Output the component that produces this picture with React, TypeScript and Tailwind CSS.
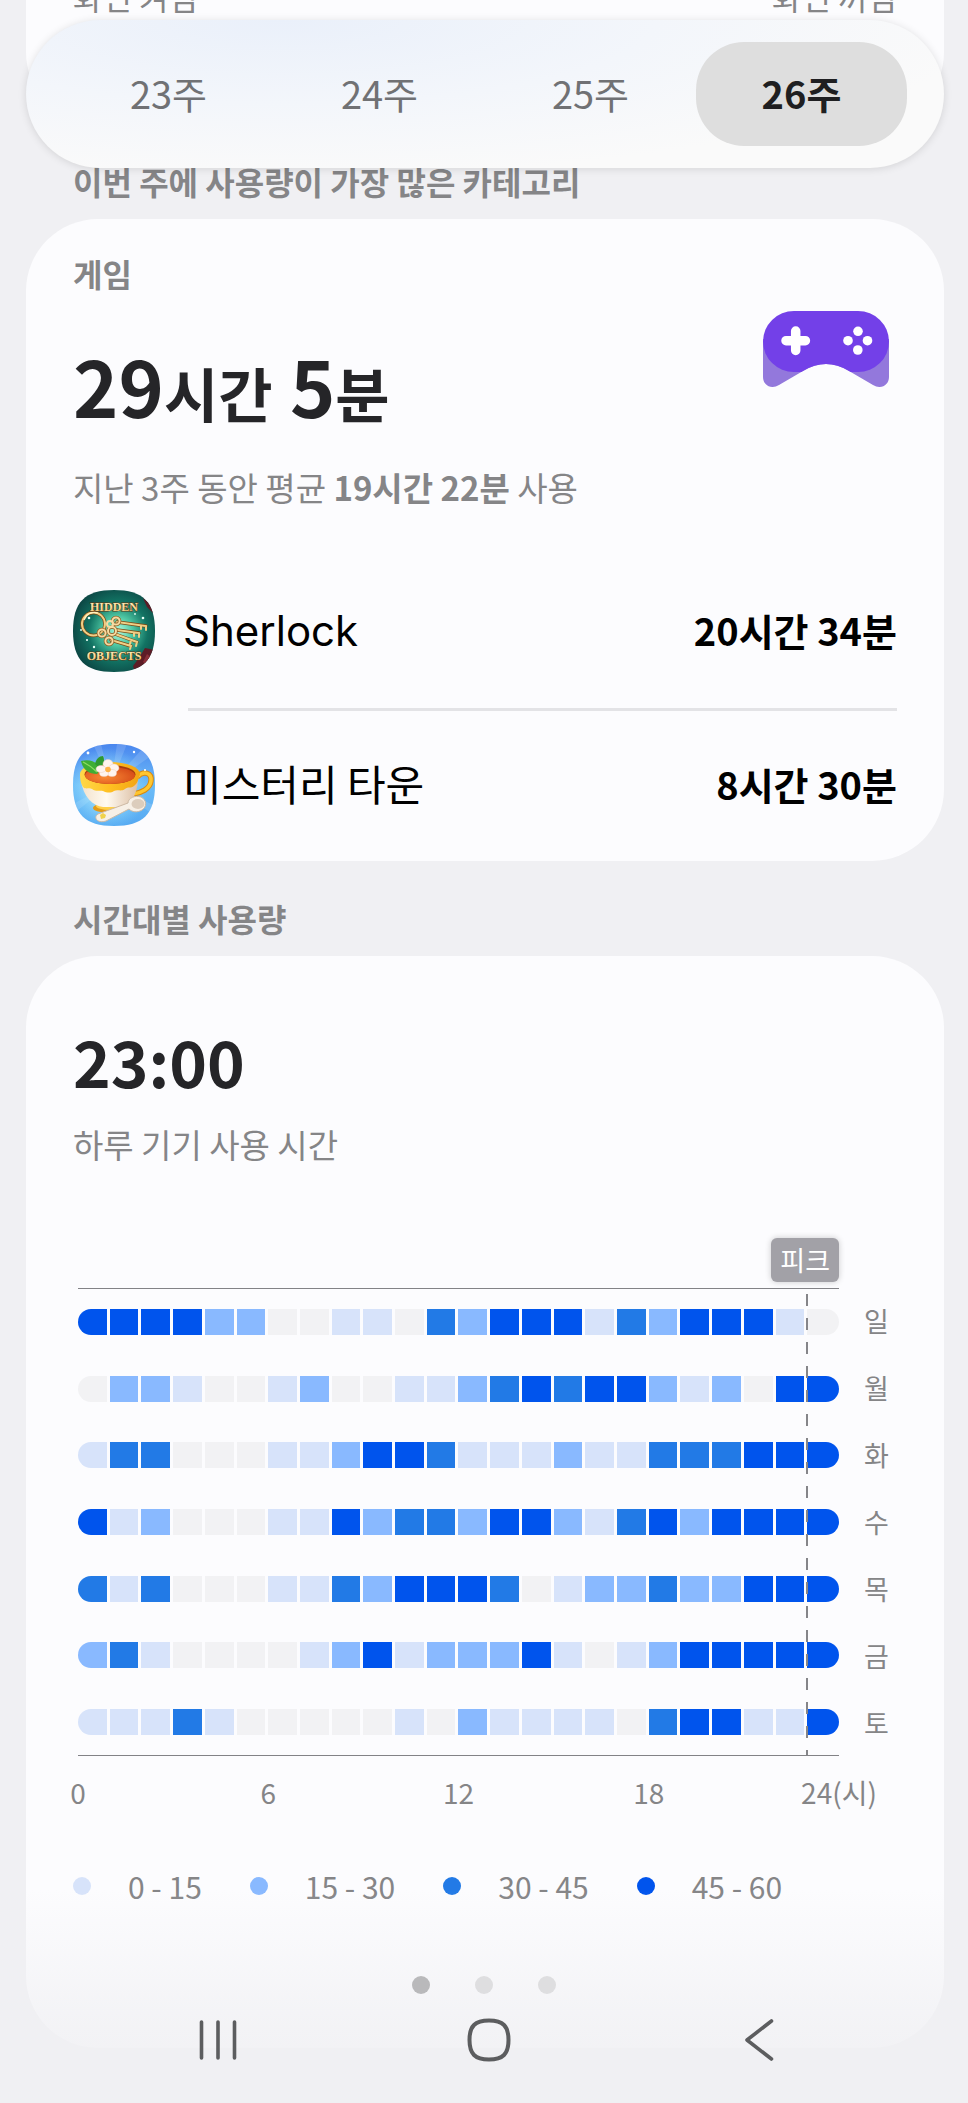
import { useState } from "react";

const WEEKS = ["23주", "24주", "25주", "26주"];

const LEVELS = [
  "bg-[#f2f2f4]",
  "bg-[#d7e3fa]",
  "bg-[#89b9ff]",
  "bg-[#227ae6]",
  "bg-[#0054ed]",
];

const LEGEND = [
  { label: "0 - 15", level: 1 },
  { label: "15 - 30", level: 2 },
  { label: "30 - 45", level: 3 },
  { label: "45 - 60", level: 4 },
];

// One digit per hour of the day; each digit indexes LEVELS.
const DAYS = [
  { name: "일", hours: "444422001103244413244410" },
  { name: "월", hours: "022100120011234344212044" },
  { name: "화", hours: "133000112443111211333444" },
  { name: "수", hours: "412000114233244213424444" },
  { name: "목", hours: "313000113244430122322444" },
  { name: "금", hours: "231000012412224101244444" },
  { name: "토", hours: "111310000010211110344114" },
];

const SQUIRCLE =
  "M41 0C70 0 82 12 82 41C82 70 70 82 41 82C12 82 0 70 0 41C0 12 12 0 41 0Z";

function SherlockIcon() {
  return (
    <svg viewBox="0 0 82 82" className="size-[82px] shrink-0" aria-hidden="true">
      <defs>
        <clipPath id="s-clip">
          <path d={SQUIRCLE} />
        </clipPath>
        <radialGradient id="s-bg" cx="0.55" cy="0.5" r="0.58">
          <stop offset="0" stopColor="#b4fbe0" />
          <stop offset="0.3" stopColor="#4fc8a4" />
          <stop offset="0.62" stopColor="#127363" />
          <stop offset="1" stopColor="#0c4543" />
        </radialGradient>
        <linearGradient id="s-gold" x1="0" y1="0" x2="0" y2="1">
          <stop offset="0" stopColor="#fff6c4" />
          <stop offset="1" stopColor="#efc473" />
        </linearGradient>
      </defs>
      <g clipPath="url(#s-clip)">
        <rect width="82" height="82" fill="url(#s-bg)" />
        <path d="M70 8l5 4 5 1v10l-6-6zM66 68l6-10 10 2v22H62l-2-6z" fill="#5d1c26" />
        <path d="M70 72l4-8 5 4-3 9z" fill="#8a2f38" />
        <g fill="none" stroke="#7a4b16" strokeWidth="3.400" strokeLinecap="round">
          <circle cx="20.500" cy="34" r="11.500" />
          <path d="M44 32L73 36M44 40l22 3M42 44l22 8M38 50l20 6" />
        </g>
        <g fill="none" stroke="#f0cf86" strokeWidth="2" strokeLinecap="round">
          <circle cx="20.500" cy="34" r="11.500" />
          <path d="M44 32L73 36v4M68 36v3M44 40l22 3v4M61 43v3M42 44l22 8-1 4M58 50l-1 4M38 50l20 6-1 3" />
        </g>
        <path d="M11 30a11 11 0 0 1 14-7" fill="none" stroke="#fff2c0" strokeWidth="1.200" />
        <g fill="none" stroke="#8e5a20" strokeWidth="3.400">
          <circle cx="43" cy="31" r="3.600" />
          <circle cx="39" cy="41" r="4" />
          <circle cx="29" cy="43" r="3.600" />
          <circle cx="36" cy="51" r="3.600" />
        </g>
        <g fill="none" stroke="#f6dba2" strokeWidth="2">
          <circle cx="43" cy="31" r="3.600" />
          <circle cx="39" cy="41" r="4" />
          <circle cx="29" cy="43" r="3.600" />
          <circle cx="36" cy="51" r="3.600" />
          <circle cx="37" cy="34" r="3" />
        </g>
        <g fill="#e6fff6">
          <circle cx="16" cy="28" r="1.300" />
          <circle cx="70" cy="28" r="1.300" />
          <circle cx="14" cy="50" r="1.100" />
          <circle cx="21" cy="57" r="1.200" />
          <circle cx="8" cy="40" r="0.900" />
          <circle cx="62" cy="24" r="0.900" />
        </g>
        <g
          fill="url(#s-gold)"
          stroke="#5b3510"
          strokeWidth="1"
          paintOrder="stroke"
          fontFamily="'Liberation Serif', serif"
          fontWeight="700"
          fontSize="12"
          textAnchor="middle"
        >
          <text x="41" y="21">HIDDEN</text>
          <text x="41" y="70">OBJECTS</text>
        </g>
      </g>
    </svg>
  );
}

function TownIcon() {
  return (
    <svg viewBox="0 0 82 82" className="size-[82px] shrink-0" aria-hidden="true">
      <defs>
        <clipPath id="t-clip">
          <path d={SQUIRCLE} />
        </clipPath>
        <linearGradient id="t-bg" x1="0" y1="0" x2="0" y2="1">
          <stop offset="0" stopColor="#4a86ee" />
          <stop offset="0.5" stopColor="#6cbcf8" />
          <stop offset="1" stopColor="#55a9f2" />
        </linearGradient>
        <radialGradient id="t-glow" cx="0.42" cy="0.55" r="0.5">
          <stop offset="0" stopColor="#d8ffff" />
          <stop offset="1" stopColor="#8fe2ff" stopOpacity="0" />
        </radialGradient>
        <linearGradient id="t-cup" x1="0" y1="0" x2="1" y2="0">
          <stop offset="0" stopColor="#f3e2cc" />
          <stop offset="0.45" stopColor="#fffaf0" />
          <stop offset="1" stopColor="#dcbfa4" />
        </linearGradient>
        <linearGradient id="t-rim" x1="0" y1="0" x2="1" y2="0">
          <stop offset="0" stopColor="#ffd84a" />
          <stop offset="0.5" stopColor="#ffc022" />
          <stop offset="1" stopColor="#f2a414" />
        </linearGradient>
        <radialGradient id="t-tea" cx="0.4" cy="0.6" r="0.6">
          <stop offset="0" stopColor="#f98a35" />
          <stop offset="1" stopColor="#d9501a" />
        </radialGradient>
      </defs>
      <g clipPath="url(#t-clip)">
        <rect width="82" height="82" fill="url(#t-bg)" />
        <path d="M38 40L20 0h8zM38 40L44 0h10zM38 40L70 4l8 8zM38 40L0 60v10zM38 40L82 62v10z" fill="#ffffff" opacity="0.140" />
        <rect width="82" height="82" fill="url(#t-glow)" />
        <path d="M64 33c7-7 15-4 14 4-1 8-10 12-18 13" fill="none" stroke="#d98a10" strokeWidth="5.500" />
        <path d="M64 33c7-7 15-4 14 4-1 8-10 12-18 13" fill="none" stroke="#ffc62e" strokeWidth="3.500" />
        <ellipse cx="37" cy="64" rx="17" ry="5" fill="#e39a18" />
        <ellipse cx="37" cy="62" rx="14" ry="4" fill="#ffd04a" />
        <path d="M8 36c2 17 12 26 22 27h15c11-1 19-10 20-27z" fill="url(#t-cup)" />
        <path d="M7 30c0 6 1 10 3 13 3 3 6 0 9 2 4 3 8 1 11 2 4 2 8 2 11 0 4-2 7 1 11-2 3-3 6 0 9-3 4-3 5-8 5-12z" fill="url(#t-rim)" />
        <ellipse cx="37" cy="30" rx="30" ry="12" fill="url(#t-rim)" />
        <ellipse cx="37" cy="30.500" rx="25.500" ry="9.500" fill="#a93c10" />
        <ellipse cx="37" cy="31.500" rx="25" ry="8.500" fill="url(#t-tea)" />
        <path d="M8 17c8-2 14 0 18 5 1 3 0 6-2 8-8 0-14-4-16-13z" fill="#3fae35" />
        <path d="M22 20c1-5 4-8 8-8 2 4 1 9-3 12z" fill="#2f9a30" />
        <path d="M10 18c6 3 10 6 14 10" stroke="#8edc62" strokeWidth="1.200" fill="none" />
        <g fill="#fff4ee" stroke="#eccfc0" strokeWidth="0.500">
          <ellipse cx="35" cy="20" rx="5" ry="4.500" />
          <ellipse cx="41" cy="24" rx="5" ry="4" />
          <ellipse cx="39" cy="29" rx="4.500" ry="3.500" />
          <ellipse cx="31" cy="29" rx="4.500" ry="3.500" />
          <ellipse cx="28" cy="25" rx="5" ry="3.500" />
        </g>
        <circle cx="35" cy="25.500" r="2.800" fill="#ffb347" />
        <path d="M25 70l30-11c0-5 7-8 13-6 6 3 6 10 1 13-5 3-10 2-13-1L33 77c-9 3-13-4-8-7z" fill="#f7f0e6" stroke="#cdb9a4" strokeWidth="1" />
        <ellipse cx="65" cy="60" rx="6.500" ry="5" fill="#dccdbc" />
        <path d="M27 71l3-2 3 2-1 3-4 1z" fill="#f0d24c" />
        <g fill="#ffffff">
          <circle cx="15" cy="9" r="1.400" />
          <circle cx="61" cy="8" r="1.200" />
          <circle cx="72" cy="26" r="1.100" />
        </g>
      </g>
    </svg>
  );
}

function GamepadIcon() {
  return (
    <svg viewBox="0 0 126 76" className="h-[76px] w-[126px] shrink-0" aria-hidden="true">
      <defs>
        <clipPath id="pad-clip">
          <path d="M0 0H126V66C126 74 118 79 110 74L86 60Q63 46 40 60L16 74C8 79 0 74 0 66Z" />
        </clipPath>
      </defs>
      <g clipPath="url(#pad-clip)">
        <rect y="28" width="126" height="50" fill="#9378dc" />
        <rect width="126" height="61" rx="31" fill="#7340e8" />
      </g>
      <path d="M32.700 20v19.400M23 29.700h19.400" stroke="#fff" strokeWidth="9.500" strokeLinecap="round" />
      <g fill="#fff">
        <circle cx="95" cy="20.300" r="4.800" />
        <circle cx="85" cy="29.700" r="4.800" />
        <circle cx="104.500" cy="29.700" r="4.800" />
        <circle cx="94.800" cy="39" r="4.800" />
      </g>
    </svg>
  );
}

function WeekTabs() {
  const [selected, setSelected] = useState(3);
  return (
    <div
      role="tablist"
      className="absolute top-5 right-[24px] left-[26px] z-10 grid h-[148px] grid-cols-4 rounded-[74px] bg-[#fafafb] bg-[radial-gradient(ellipse_at_28%_0%,#eaf0fa_0%,#f3f6fb_40%,#fafafa_75%)] px-[37px] py-[22px] shadow-[0_1px_8px_rgba(0,0,0,0.12)]"
    >
      {WEEKS.map((week, i) => (
        <button
          key={week}
          type="button"
          role="tab"
          aria-selected={i === selected}
          onClick={() => setSelected(i)}
          className={
            i === selected
              ? "rounded-[48px] bg-[#dedede] pb-[3px] text-[38px] font-bold text-[#1f1f21]"
              : "rounded-[48px] pb-[3px] text-[38px] text-[#707174]"
          }
        >
          {week}
        </button>
      ))}
    </div>
  );
}

function SectionTitle({ children }: { children: string }) {
  return (
    <h2 className="mt-[37px] mb-[18px] px-[47px] text-[32px] leading-[40px] font-bold text-[#858587]">
      {children}
    </h2>
  );
}

function CategoryCard() {
  return (
    <section className="rounded-[72px] bg-[#fcfcfe] px-[47px] pt-[34px] pb-[35px]">
      <div className="flex justify-between">
        <div>
          <h3 className="text-[32px] leading-[40px] font-bold text-[#858587]">게임</h3>
          <p className="mt-[52px] text-[77px] leading-[80px] font-bold text-[#252528]">
            29<span className="text-[59px] leading-none">시간</span> 5
            <span className="text-[59px] leading-none">분</span>
          </p>
          <p className="mt-[42px] text-[33px] leading-[40px] text-[#858587]">
            지난 3주 동안 평균 <b className="font-bold">19시간 22분</b> 사용
          </p>
        </div>
        <div className="mt-[58px] mr-[8px]">
          <GamepadIcon />
        </div>
      </div>
      <ul className="mt-[83px] text-black">
        <li className="flex items-center gap-7">
          <SherlockIcon />
          <span className="flex-1 font-[Inter] text-[42px] leading-[60px]">Sherlock</span>
          <span className="pb-1 text-[38px] font-bold">20시간 34분</span>
        </li>
        <li className="mt-9 ml-[115px] h-[3px] bg-[#e3e3e6]" role="separator" />
        <li className="mt-[33px] flex items-center gap-7">
          <TownIcon />
          <span className="flex-1 pb-1 text-[42px] leading-[60px]">미스터리 타운</span>
          <span className="pb-1 text-[38px] font-bold">8시간 30분</span>
        </li>
      </ul>
    </section>
  );
}

function UsageChart() {
  return (
    <div className="ml-[5px]">
      <div className="mr-[58px] flex justify-end">
        <span className="rounded-md bg-[#a2a1a7] px-[9px] text-[27px] leading-[44px] text-white shadow-[0_0_6px_rgba(0,0,0,0.2)]">
          피크
        </span>
      </div>
      <div className="mt-[6px] flex h-[468px]">
        <div className="relative flex flex-1 flex-col justify-between border-y border-[#828286] py-[20px]">
          {DAYS.map((day) => (
            <div key={day.name} className="grid h-[26px] grid-cols-[repeat(23,28fr)_31fr] gap-[3px]">
              {day.hours.split("").map((level, hour) => (
                <span
                  key={hour}
                  className={`${LEVELS[Number(level)]} first:rounded-l-[13px] last:rounded-r-[14px]`}
                />
              ))}
            </div>
          ))}
          <div className="absolute top-[5px] right-[31px] bottom-0 w-[2px] bg-[repeating-linear-gradient(to_bottom,#858589_0px,#858589_12px,transparent_12px,transparent_24px)]" />
        </div>
        <div className="flex w-[58px] flex-col justify-between py-[20px] pl-[25px] text-[27px] leading-[26px] text-[#858587]">
          {DAYS.map((day) => (
            <span key={day.name}>{day.name}</span>
          ))}
        </div>
      </div>
      <div className="mt-4 mr-[58px] flex justify-between text-[28px] leading-[40px] whitespace-nowrap text-[#858587]">
        {["0", "6", "12", "18", "24(시)"].map((tick) => (
          <span key={tick} className="flex w-0 justify-center">
            {tick}
          </span>
        ))}
      </div>
    </div>
  );
}

function HourlyCard() {
  return (
    <section className="rounded-[72px] bg-[#fcfcfe] px-[47px] pt-[64px] pb-[142px]">
      <p className="text-[64px] leading-[80px] font-bold text-[#252528]">23:00</p>
      <p className="mt-[24px] mb-[74px] text-[33px] leading-[40px] text-[#858587]">
        하루 기기 사용 시간
      </p>
      <UsageChart />
      <ul className="mt-[54px] flex gap-12 text-[30px] leading-[40px] text-[#858587]">
        {LEGEND.map((item) => (
          <li key={item.label} className="flex items-center gap-[37px]">
            <span className={`${LEVELS[item.level]} size-[18px] rounded-full`} />
            {item.label}
          </li>
        ))}
      </ul>
    </section>
  );
}

function BottomBar() {
  return (
    <div className="absolute inset-x-0 bottom-0 flex flex-col bg-linear-to-b from-[#f0f0f3]/0 via-[#f0f0f3]/75 via-65% to-[#f0f0f3] pt-[86px]">
      <div className="flex justify-center gap-[45px]">
        <span className="size-[18px] rounded-full bg-[#b9b9bb]" />
        <span className="size-[18px] rounded-full bg-[#dedee0]" />
        <span className="size-[18px] rounded-full bg-[#dedee0]" />
      </div>
      <nav className="mt-[22px] mb-[39px] flex justify-between pr-[185px] pl-[194px] text-[#5c5d5f]">
        <button type="button" aria-label="최근 앱">
          <svg viewBox="0 0 48 48" className="size-12" fill="none" stroke="currentColor" strokeWidth="3.600" strokeLinecap="round">
            <path d="M7.500 6v36M24 6v36M40.500 6v36" />
          </svg>
        </button>
        <button type="button" aria-label="홈">
          <svg viewBox="0 0 48 48" className="size-12" fill="none" stroke="currentColor" strokeWidth="4">
            <path d="M24 4.500C38 4.500 43.500 10 43.500 24S38 43.500 24 43.500 4.500 38 4.500 24 10 4.500 24 4.500Z" />
          </svg>
        </button>
        <button type="button" aria-label="뒤로">
          <svg viewBox="0 0 48 48" className="size-12" fill="none" stroke="currentColor" strokeWidth="3.600" strokeLinecap="round" strokeLinejoin="round">
            <path d="M36.500 5L12 24l24.500 19" />
          </svg>
        </button>
      </nav>
    </div>
  );
}

export default function App() {
  return (
    <div className="relative overflow-hidden bg-[#f0f0f3] pr-[24px] pb-[55px] pl-[26px] font-['Noto_Sans_CJK_KR',sans-serif]">
      <WeekTabs />
      <section className="-mt-5 flex h-36 justify-between rounded-b-[72px] bg-[#fcfcfe] px-[47px] text-[32px] leading-[32px] text-[#858587]">
        <span>화면 켜짐</span>
        <span>화면 꺼짐</span>
      </section>
      <SectionTitle>이번 주에 사용량이 가장 많은 카테고리</SectionTitle>
      <CategoryCard />
      <SectionTitle>시간대별 사용량</SectionTitle>
      <HourlyCard />
      <BottomBar />
    </div>
  );
}
